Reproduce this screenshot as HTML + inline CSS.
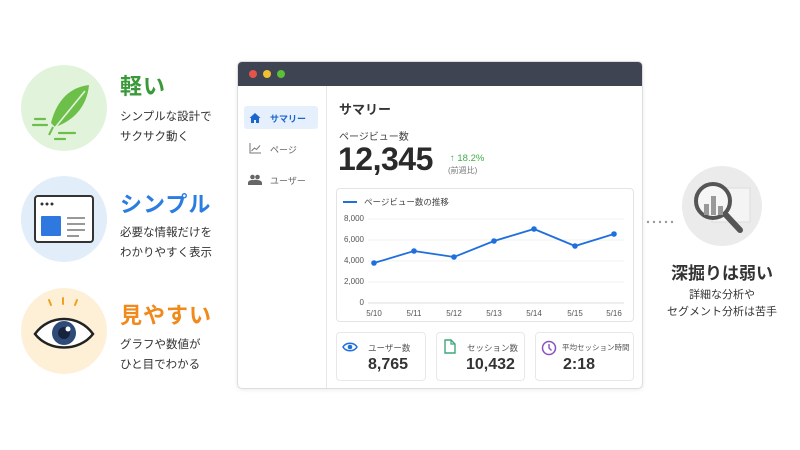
<!DOCTYPE html>
<html><head><meta charset="utf-8"><style>
*{margin:0;padding:0;box-sizing:border-box}
body{width:800px;height:450px;background:#fff;font-family:"Liberation Sans","Noto Sans CJK JP",sans-serif;position:relative;overflow:hidden;color:#333}
.a{position:absolute}
.circ{position:absolute;border-radius:50%}
.t{font-weight:bold;font-size:22px;letter-spacing:1px}
.s{font-size:11.5px;line-height:20px;color:#333}
</style></head><body>
<div class="circ" style="left:21px;top:65px;width:86px;height:86px;background:#e2f3dc"></div>
<svg class="a" style="left:21px;top:65px" width="86" height="86" viewBox="0 0 86 86">
<path d="M68 20 C50 22 36 34 30 58 L34 62 C52 56 66 42 68 20Z" fill="#6cc04a"/>
<path d="M64 26 L28 70" stroke="#e2f3dc" stroke-width="1.6"/>
<path d="M28 70 L32 62" stroke="#6cc04a" stroke-width="2"/>
<path d="M14 54h10M12 60h14M38 68h16M34 74h10" stroke="#6cc04a" stroke-width="2.2" stroke-linecap="round"/>
</svg>
<div class="a t" style="left:120px;top:69px;color:#3a9a3a">軽い</div>
<div class="a s" style="left:120px;top:107px">シンプルな設計で<br>サクサク動く</div>

<div class="circ" style="left:21px;top:176px;width:86px;height:86px;background:#e1edf9"></div>
<svg class="a" style="left:21px;top:176px" width="86" height="86" viewBox="0 0 86 86">
<rect x="14" y="20" width="58" height="46" rx="3" fill="#fff" stroke="#333" stroke-width="2"/>
<circle cx="21" cy="28" r="1.5" fill="#333"/><circle cx="26" cy="28" r="1.5" fill="#333"/><circle cx="31" cy="28" r="1.5" fill="#333"/>
<rect x="20" y="40" width="20" height="20" rx="1" fill="#2f78e0"/>
<path d="M46 42h18M46 48h18M46 54h18M46 60h12" stroke="#999" stroke-width="2"/>
</svg>
<div class="a t" style="left:120px;top:187px;color:#2b7de0">シンプル</div>
<div class="a s" style="left:120px;top:223px">必要な情報だけを<br>わかりやすく表示</div>

<div class="circ" style="left:21px;top:288px;width:86px;height:86px;background:#fdf0d6"></div>
<svg class="a" style="left:21px;top:288px" width="86" height="86" viewBox="0 0 86 86">
<path d="M28 12l2 5M42 10v6M56 12l-2 5" stroke="#f0a020" stroke-width="2" stroke-linecap="round"/>
<path d="M14 46 C28 26 58 26 72 46 C58 64 28 64 14 46Z" fill="#fff" stroke="#222" stroke-width="2.5"/>
<circle cx="43" cy="45" r="12" fill="#2e4a78"/><circle cx="43" cy="45" r="6" fill="#16233d"/><circle cx="47" cy="41" r="2.5" fill="#fff"/>
</svg>
<div class="a t" style="left:120px;top:298px;color:#f08a1c">見やすい</div>
<div class="a s" style="left:120px;top:335px">グラフや数値が<br>ひと目でわかる</div>

<div class="a" style="left:237px;top:61px;width:406px;height:328px;border:1px solid #ddd;border-radius:5px;overflow:hidden;background:#fff;box-shadow:0 1px 4px rgba(0,0,0,.08)">
 <div style="height:24px;background:#3e4452;position:relative">
  <div class="circ" style="left:11px;top:8px;width:8px;height:8px;background:#e5534b"></div>
  <div class="circ" style="left:25px;top:8px;width:8px;height:8px;background:#f0c030"></div>
  <div class="circ" style="left:39px;top:8px;width:8px;height:8px;background:#5cbf3a"></div>
 </div>
 <div class="a" style="left:88px;top:24px;width:1px;height:304px;background:#e6e6e6"></div>
 <div class="a" style="left:6px;top:44px;width:74px;height:23px;background:#e6f0fd;border-radius:3px"></div>
 <svg class="a" style="left:11px;top:50px" width="12" height="12" viewBox="0 0 12 12"><path d="M6 1L0.5 6H2v5h3V8h2v3h3V6h1.5z" fill="#1a66d0"/></svg>
 <div class="a" style="left:32px;top:50px;font-size:9px;color:#1a66d0;font-weight:bold">サマリー</div>
 <svg class="a" style="left:11px;top:81px" width="12" height="11" viewBox="0 0 12 11"><path d="M1 0v10h11" stroke="#777" fill="none"/><path d="M2.5 8l3-3 2 1.5 3.5-4" stroke="#777" fill="none"/></svg>
 <div class="a" style="left:32px;top:81px;font-size:9px;color:#666">ページ</div>
 <svg class="a" style="left:10px;top:112px" width="14" height="11" viewBox="0 0 14 11"><circle cx="4.5" cy="3" r="2.3" fill="#666"/><circle cx="9.5" cy="3" r="2.3" fill="#666"/><path d="M0 11v-2c0-2 2-3 4.5-3s4.5 1 4.5 3v2zM7 11v-2c0-1 0-2-1-3 1-.3 2-.3 3.5 0C12 6.3 14 7 14 9v2z" fill="#666"/></svg>
 <div class="a" style="left:32px;top:112px;font-size:9px;color:#666">ユーザー</div>

 <div class="a" style="left:101px;top:37px;font-size:13px;font-weight:bold;color:#333">サマリー</div>
 <div class="a" style="left:101px;top:66px;font-size:10px;color:#444">ページビュー数</div>
 <div class="a" style="left:100px;top:79px;font-size:32px;font-weight:bold;color:#2a2a2a;letter-spacing:-0.5px">12,345</div>
 <div class="a" style="left:212px;top:91px;font-size:9.5px;color:#3fae4a">↑ 18.2%</div>
 <div class="a" style="left:210px;top:103px;font-size:8px;color:#777">(前週比)</div>

 <div class="a" style="left:98px;top:126px;width:298px;height:134px;border:1px solid #e4e4e4;border-radius:4px"></div>
 <svg class="a" style="left:98px;top:126px" width="298" height="134" viewBox="0 0 298 134" font-family="Liberation Sans,Noto Sans CJK JP,sans-serif">
  <path d="M7 14h14" stroke="#1f6fdc" stroke-width="2"/>
  <text x="28" y="17" font-size="8.5" fill="#444">ページビュー数の推移</text>
  <g stroke="#f0f0f0"><path d="M32 31h256M32 52h256M32 73h256M32 94h256"/></g>
  <path d="M32 115h256" stroke="#ddd"/>
  <g font-size="8" fill="#555" text-anchor="end"><text x="28" y="33">8,000</text><text x="28" y="54">6,000</text><text x="28" y="75">4,000</text><text x="28" y="96">2,000</text><text x="28" y="117">0</text></g>
  <g font-size="8" fill="#555" text-anchor="middle"><text x="38" y="128">5/10</text><text x="78" y="128">5/11</text><text x="118" y="128">5/12</text><text x="158" y="128">5/13</text><text x="198" y="128">5/14</text><text x="239" y="128">5/15</text><text x="278" y="128">5/16</text></g>
  <polyline points="38,75 78,63 118,69 158,53 198,41 239,58 278,46" fill="none" stroke="#1f6fdc" stroke-width="1.8"/>
  <g fill="#1f6fdc"><circle cx="38" cy="75" r="2.8"/><circle cx="78" cy="63" r="2.8"/><circle cx="118" cy="69" r="2.8"/><circle cx="158" cy="53" r="2.8"/><circle cx="198" cy="41" r="2.8"/><circle cx="239" cy="58" r="2.8"/><circle cx="278" cy="46" r="2.8"/></g>
 </svg>

 <div class="a" style="left:98px;top:270px;width:90px;height:49px;border:1px solid #e8e8e8;border-radius:4px"></div>
 <svg class="a" style="left:104px;top:279px" width="16" height="12" viewBox="0 0 16 12"><path d="M1 6C4 1 12 1 15 6C12 11 4 11 1 6Z" fill="none" stroke="#1f6fdc" stroke-width="1.5"/><circle cx="8" cy="6" r="2.3" fill="#1f6fdc"/></svg>
 <div class="a" style="left:130px;top:280px;font-size:8.5px;color:#555">ユーザー数</div>
 <div class="a" style="left:130px;top:294px;font-size:16px;font-weight:bold;color:#333">8,765</div>

 <div class="a" style="left:198px;top:270px;width:89px;height:49px;border:1px solid #e8e8e8;border-radius:4px"></div>
 <svg class="a" style="left:206px;top:277px" width="12" height="15" viewBox="0 0 12 15"><path d="M1 1h6l4 4v9H1z" fill="none" stroke="#3fa87a" stroke-width="1.4"/><path d="M7 1v4h4" fill="none" stroke="#3fa87a" stroke-width="1.2"/></svg>
 <div class="a" style="left:229px;top:280px;font-size:8.5px;color:#555">セッション数</div>
 <div class="a" style="left:228px;top:294px;font-size:16px;font-weight:bold;color:#333">10,432</div>

 <div class="a" style="left:297px;top:270px;width:99px;height:49px;border:1px solid #e8e8e8;border-radius:4px"></div>
 <svg class="a" style="left:303px;top:278px" width="16" height="16" viewBox="0 0 16 16"><circle cx="8" cy="8" r="6.5" fill="none" stroke="#8a4fc0" stroke-width="1.5"/><path d="M8 4v4l2.5 2.5" fill="none" stroke="#8a4fc0" stroke-width="1.4"/></svg>
 <div class="a" style="left:324px;top:280px;font-size:7.5px;color:#555;white-space:nowrap">平均セッション時間</div>
 <div class="a" style="left:325px;top:294px;font-size:16px;font-weight:bold;color:#333">2:18</div>
</div>

<svg class="a" style="left:646px;top:219px" width="32" height="6"><g fill="#999"><circle cx="2" cy="3" r="1.2"/><circle cx="8" cy="3" r="1.2"/><circle cx="14" cy="3" r="1.2"/><circle cx="20" cy="3" r="1.2"/><circle cx="26" cy="3" r="1.2"/></g></svg>
<div class="circ" style="left:682px;top:166px;width:80px;height:80px;background:#ebebeb"></div>
<svg class="a" style="left:682px;top:166px" width="80" height="80" viewBox="0 0 80 80">
<rect x="30" y="22" width="38" height="34" fill="#f4f4f4" stroke="#ddd"/>
<circle cx="31" cy="35" r="17" fill="#f6f6f6" stroke="#555" stroke-width="4"/>
<rect x="22" y="38" width="5" height="11" fill="#999"/><rect x="29" y="30" width="5" height="19" fill="#999"/><rect x="36" y="40" width="5" height="9" fill="#999"/>
<path d="M44 49l14 15" stroke="#555" stroke-width="6" stroke-linecap="round"/>
</svg>
<div class="a" style="left:662px;top:259px;width:120px;text-align:center;font-size:17px;font-weight:bold;color:#333">深掘りは弱い</div>
<div class="a" style="left:652px;top:287px;width:140px;text-align:center;font-size:11px;line-height:17px;color:#333">詳細な分析や<br>セグメント分析は苦手</div>
</body></html>
